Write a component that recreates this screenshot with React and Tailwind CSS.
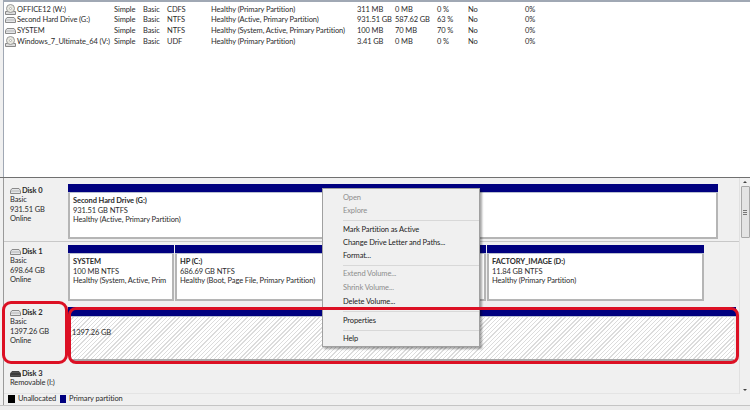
import React from "react";

const volumes = [
  { name: "OFFICE12 (W:)", icon: "cd", type: "CDFS", status: "Healthy (Primary Partition)", capacity: "311 MB", free: "0 MB", pct: "0 %" },
  { name: "Second Hard Drive (G:)", icon: "hdd", type: "NTFS", status: "Healthy (Active, Primary Partition)", capacity: "931.51 GB", free: "587.62 GB", pct: "63 %" },
  { name: "SYSTEM", icon: "hdd", type: "NTFS", status: "Healthy (System, Active, Primary Partition)", capacity: "100 MB", free: "70 MB", pct: "70 %" },
  { name: "Windows_7_Ultimate_64 (V:)", icon: "cd", type: "UDF", status: "Healthy (Primary Partition)", capacity: "3.41 GB", free: "0 MB", pct: "0 %" },
];

const menu = [
  { label: "Open", off: true, h: "h-[13px]" },
  { label: "Explore", off: true, h: "h-[13px]" },
  { sep: true, h: "h-[6px]" },
  { label: "Mark Partition as Active", h: "h-[13px]" },
  { label: "Change Drive Letter and Paths...", h: "h-[13px]" },
  { label: "Format...", h: "h-[14px]" },
  { sep: true, h: "h-[4px]" },
  { label: "Extend Volume...", off: true, h: "h-[14px]" },
  { label: "Shrink Volume...", off: true, h: "h-[14px]" },
  { label: "Delete Volume...", h: "h-[14px]" },
  { sep: true, h: "h-[5px]" },
  { label: "Properties", h: "h-[14px]" },
  { sep: true, h: "h-[4px]" },
  { label: "Help", h: "h-[14px]" },
];

const DriveIcon = ({ dark }) => (
  <svg width="11" height="6" viewBox="0 0 11 6" className="shrink-0">
    <path d="M2 0.5H9L10.5 2.5V5.5H0.5V2.5Z" fill={dark ? "#555" : "#e4e6e8"} stroke={dark ? "#444" : "#8a8a8a"} />
    <path d="M1 3H10" stroke={dark ? "#222" : "#b5b5b5"} />
  </svg>
);

const CdIcon = () => (
  <svg width="11" height="11" viewBox="0 0 11 11" className="shrink-0">
    <path d="M0.5 7.5H10.5V10.5H0.5Z" fill="#ddd" stroke="#888" />
    <circle cx="5.5" cy="4.5" r="4" fill="#e8e8e0" stroke="#999" />
    <circle cx="5.5" cy="4.5" r="1" fill="#fff" stroke="#999" strokeWidth="0.6" />
  </svg>
);

const VolumeRow = ({ v }) => (
  <div className="flex h-[10.7px] items-center whitespace-nowrap">
    <div className="flex w-[110px] items-center gap-px pl-px">
      {v.icon === "cd" ? <CdIcon /> : <DriveIcon />}
      <span>{v.name}</span>
    </div>
    <span className="w-[29px]">Simple</span>
    <span className="w-[24px]">Basic</span>
    <span className="w-[44px]">{v.type}</span>
    <span className="w-[146px]">{v.status}</span>
    <span className="w-[38px]">{v.capacity}</span>
    <span className="w-[42px]">{v.free}</span>
    <span className="w-[31px]">{v.pct}</span>
    <span className="w-[57px]">No</span>
    <span>0%</span>
  </div>
);

const DiskLabel = ({ name, lines, dark }) => (
  <div className="w-[64px] shrink-0 pl-[6px] pt-[2px] leading-[9.4px]">
    <div className="flex items-center gap-px font-bold">
      <DriveIcon dark={dark} />
      <span>{name}</span>
    </div>
    {lines.map((l) => (
      <div key={l}>{l}</div>
    ))}
  </div>
);

const Partition = ({ className, title, size, health }) => (
  <div className={`flex flex-col ${className}`}>
    <div className="h-[8px] bg-[#00007f]" />
    <div className="h-px bg-[#b9bfd0]" />
    <div className="flex-1 overflow-hidden whitespace-nowrap border-x-2 border-b-2 border-[#b5b5b5] bg-white pl-[3px] pt-[3px] leading-[9.5px]">
      <div className="font-bold">{title}</div>
      <div>{size}</div>
      <div>{health}</div>
    </div>
  </div>
);

export default function App() {
  return (
    <div className="relative flex h-[410px] w-[750px] flex-col overflow-hidden bg-[#f0f0f0] font-['Lato','Liberation_Sans',sans-serif] text-[7.5px] tracking-[-0.1px] text-[#2b2b2b]">
      {/* volume list */}
      <div className="h-[178px] shrink-0 border-b border-[#707070] bg-[#f0f0f0] pl-[3px]">
        <div className="h-full border-l border-t-2 border-[#a0a8b4] bg-white pt-[2px]">
          {volumes.map((v) => (
            <VolumeRow key={v.name} v={v} />
          ))}
        </div>
      </div>

      {/* graphical view */}
      <div className="flex min-h-0 flex-1 pl-[3px]">
        <div className="flex min-w-0 flex-1 flex-col border-l border-[#9a9a9a]">
          <div className="flex h-[64px] border-b border-[#c8c8c8] pt-[6px]">
            <DiskLabel name="Disk 0" lines={["Basic", "931.51 GB", "Online"]} />
            <Partition
              className="mb-[2px] w-[650px]"
              title="Second Hard Drive  (G:)"
              size="931.51 GB NTFS"
              health="Healthy (Active, Primary Partition)"
            />
          </div>
          <div className="flex h-[61px] pt-[3px]">
            <DiskLabel name="Disk 1" lines={["Basic", "698.64 GB", "Online"]} />
            <div className="mb-[2px] flex w-[636px] gap-px">
              <Partition
                className="w-[106px]"
                title="SYSTEM"
                size="100 MB NTFS"
                health="Healthy (System, Active, Prim"
              />
              <Partition
                className="w-[311px]"
                title="HP  (C:)"
                size="686.69 GB NTFS"
                health="Healthy (Boot, Page File, Primary Partition)"
              />
              <Partition
                className="flex-1"
                title="FACTORY_IMAGE  (D:)"
                size="11.84 GB NTFS"
                health="Healthy (Primary Partition)"
              />
            </div>
          </div>
          <div className="flex h-[62px] pt-[3px]">
            <DiskLabel name="Disk 2" lines={["Basic", "1397.26 GB", "Online"]} />
            <div className="mb-[4px] mt-px flex w-[668px] flex-col">
              <div className="h-[9px] bg-[#00007f]" />
              <div className="h-px bg-[#b9bfd0]" />
              <div className="mx-[2px] flex-1 border-b-2 border-[#a8a8a8] bg-[repeating-linear-gradient(135deg,#ffffff_0px,#ffffff_2px,#dcdcdc_2px,#dcdcdc_3px)] pl-[2px] pt-[10px]">
                1397.26 GB
              </div>
            </div>
          </div>
          <div className="flex h-[28px] pt-[2px]">
            <DiskLabel name="Disk 3" lines={["Removable (I:)"]} dark />
          </div>
          <div className="flex h-[11px] items-center gap-[3px] border-t border-[#e4e4e4] pl-[4px]">
            <span className="h-[8px] w-[7px] bg-black" />
            <span className="mr-px">Unallocated</span>
            <span className="h-[8px] w-[6px] bg-[#00007f]" />
            <span>Primary partition</span>
          </div>
        </div>

        {/* scrollbar */}
        <div className="flex h-[216px] w-[11px] shrink-0 flex-col items-center border-l border-[#e0e0e0] pt-[3px]">
          <span className="h-0 w-0 border-x-[2px] border-b-[2px] border-x-transparent border-b-[#444]" />
          <div className="mt-[3px] flex h-[52px] w-[9px] flex-col items-center justify-center gap-px rounded-[1px] border border-[#a8a8a8] bg-[#e4e4e4]">
            <span className="h-px w-[4px] bg-[#777]" />
            <span className="h-px w-[4px] bg-[#777]" />
            <span className="h-px w-[4px] bg-[#777]" />
          </div>
          <span className="mb-[3px] mt-auto h-0 w-0 border-x-[2px] border-t-[2px] border-x-transparent border-t-[#444]" />
        </div>
      </div>

      {/* status bar */}
      <div className="h-[5px] shrink-0 border-t border-[#c4c4c4] bg-[#ececec]" />

      {/* context menu */}
      <div className="absolute left-[322px] top-[188px] h-[159px] w-[158px] border border-[#a0a0a0] bg-[#f0f0f0] pt-[2px] shadow-[2px_2px_2px_rgba(0,0,0,0.35)]">
        {menu.map((m, i) =>
          m.sep ? (
            <div key={i} className={`ml-[20px] flex items-center ${m.h}`}>
              <div className="h-px w-full bg-[#d8d8d8]" />
            </div>
          ) : (
            <div
              key={i}
              className={`flex items-center pl-[20px] ${m.h} ${m.off ? "text-[#8d8d8d]" : "text-[#1c1c1c]"}`}
            >
              {m.label}
            </div>
          )
        )}
      </div>

      {/* red highlights */}
      <div className="absolute left-[2px] top-[301px] h-[63px] w-[66px] rounded-[9px] border-[3px] border-[#dc1024]" />
      <div className="absolute left-[68px] top-[307px] h-[57px] w-[671px] rounded-[8px] border-[3px] border-[#dc1024]" />
    </div>
  );
}
